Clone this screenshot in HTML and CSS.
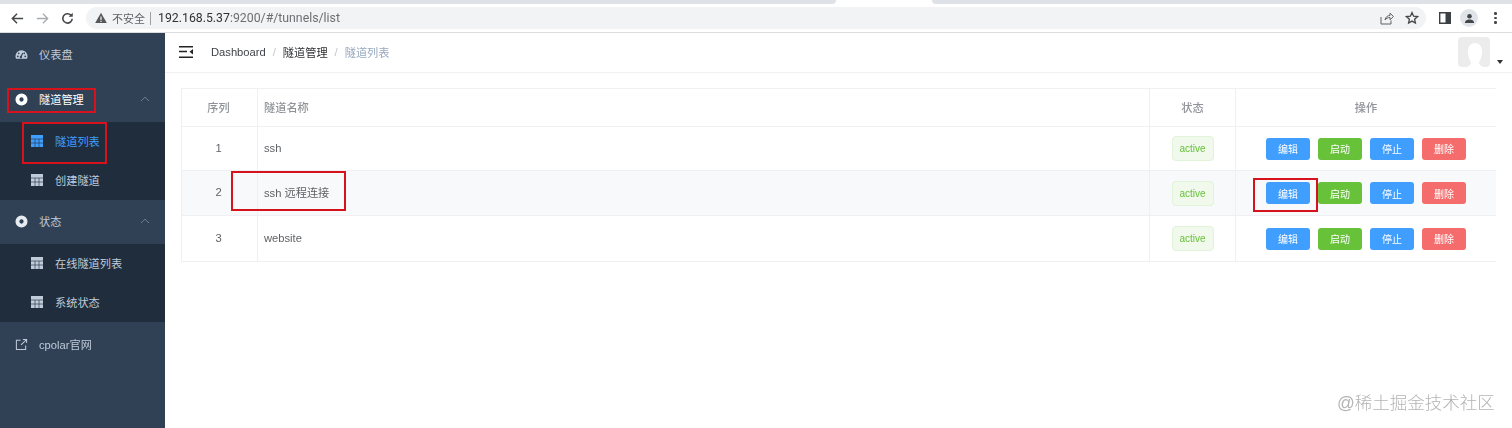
FILE: index.html
```html
<!DOCTYPE html>
<html lang="zh">
<head>
<meta charset="utf-8">
<title>隧道列表</title>
<link rel="stylesheet" href="styles.css">
</head>
<body>
<div class="tabstrip"><span class="tab-left"></span><span class="tab-gap"></span><span class="tab-right"></span></div>
<header class="toolbar">
  <svg class="nav-ico" viewBox="0 0 16 16"><path d="M14 8H3M7.500 3 2.500 8l5 5" fill="none" stroke="#44474a" stroke-width="1.600"/></svg>
  <svg class="nav-ico" viewBox="0 0 16 16"><path d="M2 8h11M8.500 3l5 5-5 5" fill="none" stroke="#a9abae" stroke-width="1.400"/></svg>
  <svg class="nav-ico" viewBox="0 0 16 16"><path d="M13 8.200A5 5 0 1 1 11.600 4.400" fill="none" stroke="#44474a" stroke-width="1.700"/><path d="M13.600 1.800v4.400H9.200z" fill="#44474a"/></svg>
  <div class="omnibox">
    <svg class="warn" viewBox="0 0 12 12"><path d="M6 .8 11.800 11H.2z" fill="#55585b"/><path d="M5.400 4.400h1.200v3.600H5.400zM5.400 8.800h1.200V10H5.400z" fill="#f1f3f4"/></svg>
    <span class="insecure">不安全</span><span class="sep"></span>
    <span class="url"><b>192.168.5.37</b>:9200/#/tunnels/list</span>
    <span class="omni-right">
      <svg class="omni-ico" viewBox="0 0 14 14"><path d="M1 6v7h10V9.500M5 9c.4-3 2.600-4.500 5-4.500V2.200L13.500 5.500 10 8.800V6.500C8 6.500 6.200 7.300 5 9z" fill="none" stroke="#5f6368"/></svg>
      <svg class="omni-ico" viewBox="0 0 14 14"><path d="m7 1.600 1.600 3.600 3.900.4-2.900 2.600.8 3.800L7 10.100 3.600 12l.8-3.800L1.500 5.600l3.900-.4z" fill="none" stroke="#44474a" stroke-width="1.300"/></svg>
    </span>
  </div>
  <svg class="panel-ico" viewBox="0 0 12 12"><path d="M.7.700h10.600v10.600H.7z" fill="#fff" stroke="#3c4043" stroke-width="1.400"/><path d="M6.500 1h5v10h-5z" fill="#3c4043"/></svg>
  <span class="profile"><svg class="profile-ico" viewBox="0 0 12 12"><circle cx="6" cy="3.600" r="2.500" fill="#44474a"/><path d="M1 11c0-3 2.500-4 5-4s5 1 5 4z" fill="#44474a"/></svg></span>
  <span class="kebab"><i></i><i></i><i></i></span>
</header>
<div class="app">
  <nav class="sidebar">
    <a class="menu-item first">
      <svg class="m-ico" viewBox="0 0 14 14"><path fill-rule="evenodd" d="M7 2.500a6.500 6.500 0 0 1 6.500 6.500c0 1-.2 1.900-.6 2.600H1.100A6.500 6.500 0 0 1 .5 9 6.500 6.500 0 0 1 7 2.500zM3 8a1 1 0 1 0 0 2 1 1 0 0 0 0-2zm8 0a1 1 0 1 0 0 2 1 1 0 0 0 0-2zM4 4.800a.9.900 0 1 0 0 1.800.9.900 0 0 0 0-1.800zm6 0a.9.900 0 1 0 0 1.800.9.900 0 0 0 0-1.800zM8 5 6 8.500a1.300 1.300 0 1 0 1.400.5L9 5.500z" fill="#bfcbd9"/></svg>
      <span>仪表盘</span>
    </a>
    <a class="menu-item open">
      <svg class="m-ico" viewBox="0 0 14 14"><path fill-rule="evenodd" d="M7 .5a6.500 6.500 0 1 1 0 13A6.500 6.500 0 0 1 7 .5zm0 4.200a2.300 2.300 0 1 0 0 4.600 2.300 2.300 0 0 0 0-4.600z" fill="#fff"/></svg>
      <span>隧道管理</span>
      <svg class="chev" viewBox="0 0 10 6"><path d="M1 5 5 1.200 9 5" fill="none" stroke="#6f7e8f"/></svg>
    </a>
    <div class="submenu">
      <a class="sub-item active"><svg class="s-ico" viewBox="0 0 12 12"><path d="M0 0h12v12H0z" fill="currentColor"/><path d="M0 4h12M4 4v8M8 4v8M0 8h12" stroke="#1f2d3d" stroke-width=".6"/></svg><span>隧道列表</span></a>
      <a class="sub-item"><svg class="s-ico" viewBox="0 0 12 12"><path d="M0 0h12v12H0z" fill="currentColor"/><path d="M0 4h12M4 4v8M8 4v8M0 8h12" stroke="#1f2d3d" stroke-width=".6"/></svg><span>创建隧道</span></a>
    </div>
    <a class="menu-item">
      <svg class="m-ico" viewBox="0 0 14 14"><path fill-rule="evenodd" d="M7 .5a6.500 6.500 0 1 1 0 13A6.500 6.500 0 0 1 7 .5zm0 4.200a2.300 2.300 0 1 0 0 4.600 2.300 2.300 0 0 0 0-4.600z" fill="#e6ebf0"/></svg>
      <span>状态</span>
      <svg class="chev" viewBox="0 0 10 6"><path d="M1 5 5 1.200 9 5" fill="none" stroke="#6f7e8f"/></svg>
    </a>
    <div class="submenu">
      <a class="sub-item"><svg class="s-ico" viewBox="0 0 12 12"><path d="M0 0h12v12H0z" fill="currentColor"/><path d="M0 4h12M4 4v8M8 4v8M0 8h12" stroke="#1f2d3d" stroke-width=".6"/></svg><span>在线隧道列表</span></a>
      <a class="sub-item"><svg class="s-ico" viewBox="0 0 12 12"><path d="M0 0h12v12H0z" fill="currentColor"/><path d="M0 4h12M4 4v8M8 4v8M0 8h12" stroke="#1f2d3d" stroke-width=".6"/></svg><span>系统状态</span></a>
    </div>
    <a class="menu-item last">
      <svg class="m-ico" viewBox="0 0 14 14"><path d="M6 2.500H1.500v10h10V8M8.500 1.500h4v4M12.300 1.700 6.500 7.500" fill="none" stroke="#bfcbd9" stroke-width="1.100"/></svg>
      <span>cpolar官网</span>
    </a>
  </nav>
  <main class="main">
    <div class="navbar">
      <svg class="hamburger" viewBox="0 0 14 12"><path d="M0 .8h14M0 5.500h8M0 11.200h14" stroke="#222" stroke-width="1.600"/><path d="M14 3 10.500 5.800 14 8.500z" fill="#222"/></svg>
      <div class="crumbs">
        <span class="c-first">Dashboard</span><span class="c-sep">/</span><span class="c-mid">隧道管理</span><span class="c-sep">/</span><span class="c-last">隧道列表</span>
      </div>
      <div class="avatar-wrap">
        <svg class="avatar" viewBox="0 0 32 30"><path d="M4 0h24a4 4 0 0 1 4 4v22a4 4 0 0 1-4 4h-3c-2-1-4-2-4-5 2-2 3-7 3-11 0-5-3-8-7-8s-7 3-7 8c0 4 1 9 3 11 0 3-2 4-4 5H4a4 4 0 0 1-4-4V4a4 4 0 0 1 4-4z" fill="#ececec"/></svg>
        <span class="caret"></span>
      </div>
    </div>
    <div class="content">
      <div class="table">
        <div class="row head">
          <div class="c c-idx">序列</div><div class="c c-name">隧道名称</div><div class="c c-state">状态</div><div class="c c-ops">操作</div>
        </div>
        <div class="row">
          <div class="c c-idx">1</div><div class="c c-name">ssh</div>
          <div class="c c-state"><span class="tag">active</span></div>
          <div class="c c-ops"><button class="btn blue">编辑</button><button class="btn green">启动</button><button class="btn blue">停止</button><button class="btn red">删除</button></div>
        </div>
        <div class="row tall hover">
          <div class="c c-idx">2</div><div class="c c-name">ssh 远程连接</div>
          <div class="c c-state"><span class="tag">active</span></div>
          <div class="c c-ops"><button class="btn blue">编辑</button><button class="btn green">启动</button><button class="btn blue">停止</button><button class="btn red">删除</button></div>
        </div>
        <div class="row tall">
          <div class="c c-idx">3</div><div class="c c-name">website</div>
          <div class="c c-state"><span class="tag">active</span></div>
          <div class="c c-ops"><button class="btn blue">编辑</button><button class="btn green">启动</button><button class="btn blue">停止</button><button class="btn red">删除</button></div>
        </div>
      </div>
    </div>
  </main>
</div>
<span class="mark m1"></span><span class="mark m2"></span><span class="mark m3"></span><span class="mark m4"></span>
<span class="watermark">@稀土掘金技术社区</span>
</body>
</html>
```
FILE: styles.css
```css
* { box-sizing: border-box; }
html, body { margin: 0; padding: 0; }
body {
  width: 1512px; height: 428px; overflow: hidden; position: relative;
  background: #fff;
  font-family: "Liberation Sans", "Noto Sans CJK SC", sans-serif;
  font-size: 11.200px; color: #606266;
  display: flex; flex-direction: column;
}
svg { display: block; flex: none; }
.tabstrip { display: flex; height: 4px; flex: none; }
.tab-left { width: 836px; background: #dee1e6; border-bottom-right-radius: 4px; }
.tab-gap { width: 96px; background: #fff; }
.tab-right { flex: 1; background: #dee1e6; border-bottom-left-radius: 4px; }
.toolbar {
  height: 29px; flex: none; display: flex; align-items: center;
  padding-left: 10px; border-bottom: 1px solid #dadce0; background: #fff; filter: blur(.3px);
}
.nav-ico { width: 15px; height: 15px; margin-right: 10px; }
.omnibox {
  margin-left: 1px; width: 1340px; height: 22px; border-radius: 11px; background: #f1f3f4;
  display: flex; align-items: center; padding-left: 9px; font-family: "Roboto", "Noto Sans CJK SC", sans-serif;
}
.warn { width: 12px; height: 12px; }
.insecure { margin-left: 5px; font-size: 11px; color: #5f6368; }
.sep { width: 1px; height: 13px; background: #9aa0a6; margin: 0 7px 0 5px; }
.url { font-size: 12.300px; color: #6b6f73; white-space: nowrap; }
.url b { font-weight: 400; color: #303236; }
.omni-right { margin-left: auto; display: flex; align-items: center; gap: 11px; padding-right: 7px; }
.omni-ico { width: 14px; height: 14px; }
.panel-ico { width: 12px; height: 12px; margin-left: 13px; }
.profile { width: 18px; height: 18px; border-radius: 50%; background: #e0e3e8; margin-left: 9px; display: flex; align-items: center; justify-content: center; }
.profile-ico { width: 11px; height: 11px; }
.kebab { display: flex; flex-direction: column; gap: 2px; margin-left: 16px; }
.kebab i { width: 2.500px; height: 2.500px; border-radius: 50%; background: #44474a; }

.app { flex: 1; display: flex; min-height: 0; filter: blur(.3px); }
.sidebar { width: 165px; flex: none; background: #304156; display: flex; flex-direction: column; color: #bfcbd9; }
.menu-item { height: 44px; display: flex; align-items: center; padding: 0 0 2px 15px; color: #bfcbd9; flex: none; }
.menu-item.first { height: 45px; padding-bottom: 3px; }
.menu-item.last { padding-bottom: 0; }
.menu-item span { margin-left: 11px; }
.menu-item .m-ico { width: 13px; height: 13px; }
.menu-item.open span { color: #fff; }
.chev { width: 10px; height: 6px; margin-left: auto; margin-right: 15px; }
.submenu { background: #1f2d3d; display: flex; flex-direction: column; height: 78px; flex: none; }
.sub-item { height: 39px; display: flex; align-items: center; padding: 0 0 1px 31px; color: #bfcbd9; }
.sub-item span { margin-left: 12px; }
.s-ico { width: 12px; height: 12px; }
.sub-item.active { color: #409eff; }

.main { flex: 1; min-width: 0; display: flex; flex-direction: column; }
.navbar { height: 40px; flex: none; display: flex; align-items: center; padding-left: 14px; border-bottom: 1px solid #f0f1f3; }
.hamburger { width: 14px; height: 12px; margin-top: -1px; }
.crumbs { margin-left: 18px; margin-top: -1px; display: flex; align-items: center; }
.c-first { color: #40434a; }
.c-mid { color: #303133; }
.c-last { color: #97a8be; }
.c-sep { margin: 0 7px; color: #c0c4cc; }
.avatar-wrap { margin-left: auto; display: flex; align-items: flex-end; margin-right: 9px; margin-top: -2px; }
.avatar { width: 32px; height: 30px; }
.caret { width: 0; height: 0; border: 3.500px solid transparent; border-top: 4px solid #333; border-bottom: 0; margin-left: 7px; margin-bottom: 3px; }

.content { padding: 15px 16px 0 16px; }
.table { border: 1px solid #eef0f4; border-right: 0; }
.row { display: flex; height: 44px; border-bottom: 1px solid #eef0f4; }
.row.tall { height: 45px; }
.row.head { height: 38px; color: #909399; font-weight: 500; }
.row.head .c { padding-bottom: 2px; }
.row:last-child { border-bottom: 0; }
.row.hover { background: #f7f9fb; }
.c { display: flex; align-items: center; justify-content: center; border-right: 1px solid #eef0f4; flex: none; }
.c-idx { width: 76px; padding: 0 2px 2px 0; }
.c-name { width: 892px; justify-content: flex-start; padding: 0 0 2px 6px; }
.c-state { width: 86px; }
.c-ops { flex: 1; border-right: 0; gap: 8px; }
.tag {
  width: 42px; height: 25px; display: flex; align-items: center; justify-content: center;
  background: #f0f9eb; border: 1px solid #e1f3d8; border-radius: 4px; color: #67c23a; font-size: 10px;
}
.btn {
  width: 44px; height: 22px; padding: 0; border: 0; border-radius: 3px; color: #fff;
  font: 400 10px "Liberation Sans", "Noto Sans CJK SC", sans-serif;
}
.blue { background: #409eff; }
.green { background: #67c23a; }
.red { background: #f56c6c; }

.mark { position: absolute; border: 2px solid #d8121c; }
.m1 { left: 7px; top: 88px; width: 89px; height: 25px; }
.m2 { left: 22px; top: 122px; width: 85px; height: 42px; }
.m3 { left: 231px; top: 171px; width: 115px; height: 40px; }
.m4 { left: 1253px; top: 178px; width: 65px; height: 34px; }
.watermark { position: absolute; left: 1337px; top: 392px; font-size: 17.500px; line-height: 22px; color: #b4b4b4; font-weight: 300; white-space: nowrap; }
```
